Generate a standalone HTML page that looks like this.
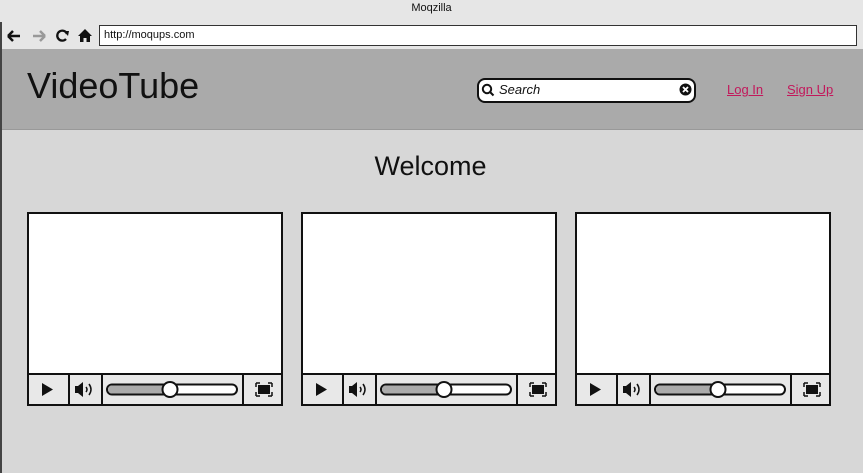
<!DOCTYPE html>
<html><head><style>
*{margin:0;padding:0;box-sizing:border-box}
body{width:863px;height:473px;overflow:hidden;background:#d7d7d7;font-family:"Liberation Sans",Arial,sans-serif;position:relative}
.abs{position:absolute}
.player{position:absolute;top:212px;width:256px;height:194px;border:2px solid #111;background:#fff}
.bar{position:absolute;left:0;right:0;bottom:0;height:31px;border-top:2px solid #111;background:#e8e8e8}
.div{position:absolute;top:0;bottom:0;width:2px;background:#111}
</style></head><body>
<div class="abs" style="left:0;top:0;width:863px;height:49px;background:#e6e6e6"></div>
<div class="abs" style="left:0;top:2px;width:863px;text-align:center;font-size:11px;color:#111">Moqzilla</div>
<div class="abs" style="left:0;top:22px;width:2px;height:451px;background:#444"></div>
<svg class="abs" style="left:5px;top:26px" width="90" height="20" viewBox="0 0 90 20">
<path d="M3 10H15M3 10L8 5M3 10L8 15" stroke="#111" stroke-width="2.5" fill="none"/>
<path d="M40 10H28M40 10L35 5M40 10L35 15" stroke="#999" stroke-width="2.5" fill="none"/>
<path d="M62 8A5 5 0 1 0 61 13" stroke="#111" stroke-width="2.3" fill="none"/><path d="M59 5L64 5L63 10Z" fill="#111"/>
<path d="M73 10L80 3L87 10H85V16H75V10Z" fill="#111"/><rect x="78.5" y="12" width="3" height="4" fill="#e6e6e6"/>
</svg>
<div class="abs" style="left:99px;top:25px;width:758px;height:21px;border:1px solid #333;background:#fff;font-size:11px;padding:3px 4px;color:#111">http://moqups.com</div>
<div class="abs" style="left:2px;top:49px;width:861px;height:81px;background:#aaa;border-bottom:1px solid #999"></div>
<div class="abs" style="left:27px;top:65px;font-size:36px;color:#111">VideoTube</div>
<div class="abs" style="left:477px;top:78px;width:219px;height:25px;border:2px solid #111;border-radius:8px;background:#fff"></div>
<svg class="abs" style="left:481px;top:83px" width="14" height="14"><circle cx="6" cy="6" r="4.2" stroke="#111" stroke-width="2" fill="none"/><path d="M9 9L12.5 12.5" stroke="#111" stroke-width="2"/></svg>
<div class="abs" style="left:499px;top:82px;font-size:13px;font-style:italic;color:#111">Search</div>
<svg class="abs" style="left:679px;top:83px" width="13" height="13"><circle cx="6.5" cy="6.5" r="6" fill="#111"/><path d="M4 4L9 9M9 4L4 9" stroke="#fff" stroke-width="1.8"/></svg>
<div class="abs" style="left:727px;top:82px;font-size:13px;color:#c2185b;text-decoration:underline">Log In</div>
<div class="abs" style="left:787px;top:82px;font-size:13px;color:#c2185b;text-decoration:underline">Sign Up</div>
<div class="abs" style="left:0;top:151px;width:861px;text-align:center;font-size:27px;color:#111">Welcome</div>
<div class="player" style="left:27px"><div class="bar">
<div class="div" style="left:39px"></div><div class="div" style="left:72px"></div><div class="div" style="left:213px"></div>
<svg class="abs" style="left:0;top:0" width="252" height="29">
<path d="M13 8L24 14.5L13 21Z" fill="#111"/>
<path d="M46 11H49L54 7V22L49 18H46Z" fill="#111"/><path d="M57 12Q59 14.5 57 17M60 9Q64 14.5 60 20" stroke="#111" stroke-width="1.5" fill="none"/>
<rect x="78" y="9.5" width="130" height="10" rx="5" fill="#fff" stroke="#111" stroke-width="2"/>
<rect x="79" y="10.5" width="62" height="8" rx="4" fill="#aaa"/>
<circle cx="141" cy="14.5" r="7.5" fill="#fff" stroke="#111" stroke-width="2"/>
<rect x="229" y="10" width="12" height="9" fill="#111"/><path d="M227 8H231M227 8V12M243 8H239M243 8V12M227 21H231M227 21V17M243 21H239M243 21V17" stroke="#111" stroke-width="1.5"/>
</svg></div></div>
<div class="player" style="left:301px"><div class="bar">
<div class="div" style="left:39px"></div><div class="div" style="left:72px"></div><div class="div" style="left:213px"></div>
<svg class="abs" style="left:0;top:0" width="252" height="29">
<path d="M13 8L24 14.5L13 21Z" fill="#111"/>
<path d="M46 11H49L54 7V22L49 18H46Z" fill="#111"/><path d="M57 12Q59 14.5 57 17M60 9Q64 14.5 60 20" stroke="#111" stroke-width="1.5" fill="none"/>
<rect x="78" y="9.5" width="130" height="10" rx="5" fill="#fff" stroke="#111" stroke-width="2"/>
<rect x="79" y="10.5" width="62" height="8" rx="4" fill="#aaa"/>
<circle cx="141" cy="14.5" r="7.5" fill="#fff" stroke="#111" stroke-width="2"/>
<rect x="229" y="10" width="12" height="9" fill="#111"/><path d="M227 8H231M227 8V12M243 8H239M243 8V12M227 21H231M227 21V17M243 21H239M243 21V17" stroke="#111" stroke-width="1.5"/>
</svg></div></div>
<div class="player" style="left:575px"><div class="bar">
<div class="div" style="left:39px"></div><div class="div" style="left:72px"></div><div class="div" style="left:213px"></div>
<svg class="abs" style="left:0;top:0" width="252" height="29">
<path d="M13 8L24 14.5L13 21Z" fill="#111"/>
<path d="M46 11H49L54 7V22L49 18H46Z" fill="#111"/><path d="M57 12Q59 14.5 57 17M60 9Q64 14.5 60 20" stroke="#111" stroke-width="1.5" fill="none"/>
<rect x="78" y="9.5" width="130" height="10" rx="5" fill="#fff" stroke="#111" stroke-width="2"/>
<rect x="79" y="10.5" width="62" height="8" rx="4" fill="#aaa"/>
<circle cx="141" cy="14.5" r="7.5" fill="#fff" stroke="#111" stroke-width="2"/>
<rect x="229" y="10" width="12" height="9" fill="#111"/><path d="M227 8H231M227 8V12M243 8H239M243 8V12M227 21H231M227 21V17M243 21H239M243 21V17" stroke="#111" stroke-width="1.5"/>
</svg></div></div>
</body></html>
